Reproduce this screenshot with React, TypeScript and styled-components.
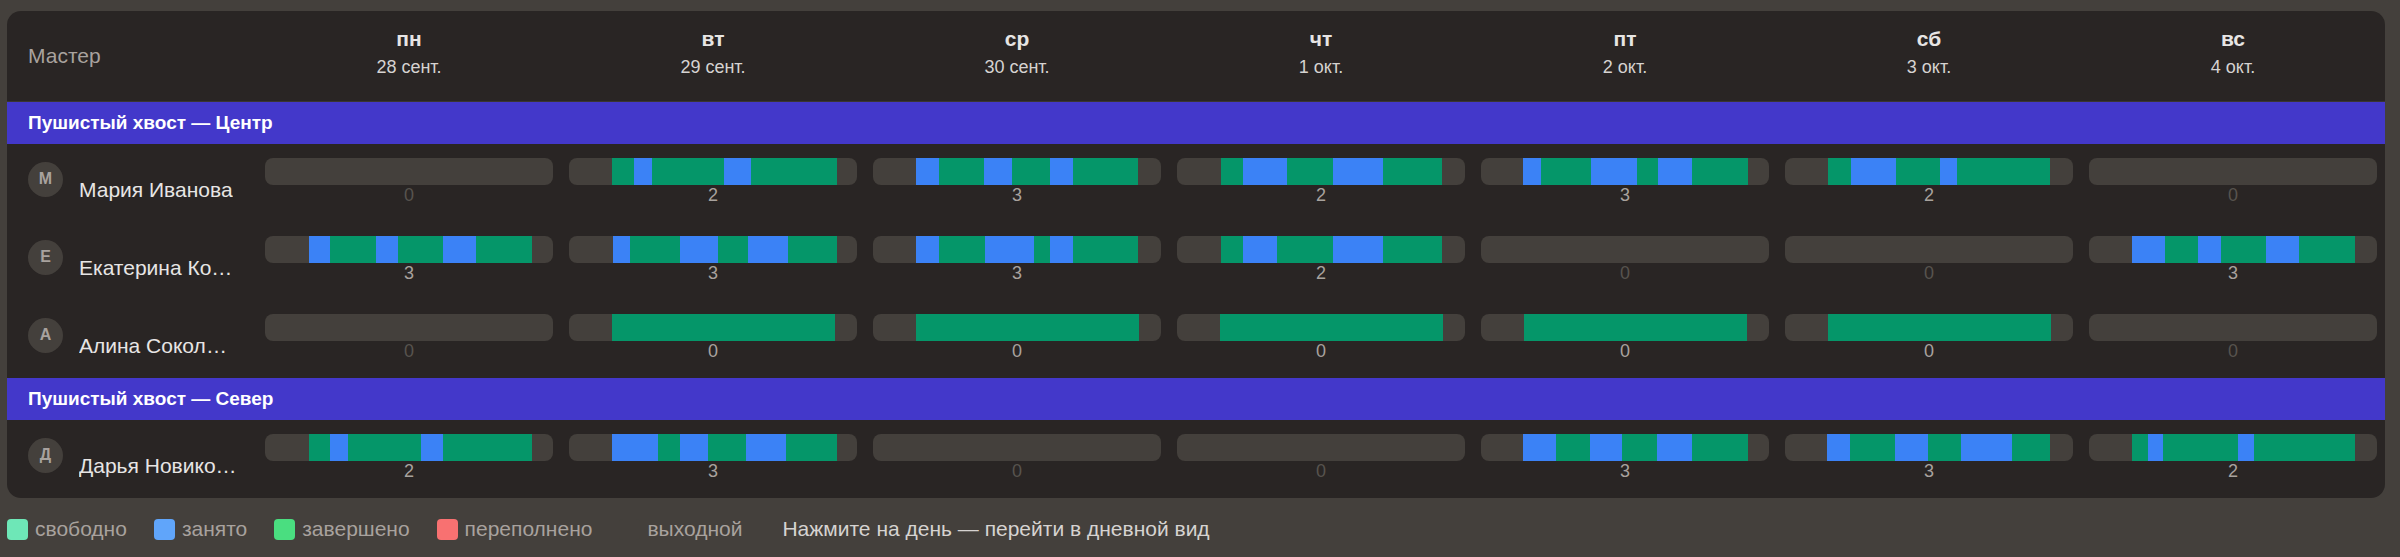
import React from 'react';
import styled, { createGlobalStyle } from 'styled-components';

const GlobalStyle = createGlobalStyle`
  html, body {
    margin: 0;
    padding: 0;
    background: #44403c;
    font-family: "Liberation Sans", Arial, sans-serif;
  }
`;

type Kind = 'b' | 'g';
type Seg = [Kind, number, number];
type Day = { segs: Seg[] | null; count: number };

const BAR = 288;

const days = [
  { name: 'пн', date: '28 сент.' },
  { name: 'вт', date: '29 сент.' },
  { name: 'ср', date: '30 сент.' },
  { name: 'чт', date: '1 окт.' },
  { name: 'пт', date: '2 окт.' },
  { name: 'сб', date: '3 окт.' },
  { name: 'вс', date: '4 окт.' },
];

const off: Day = { segs: null, count: 0 };
const full: Day = { segs: [['g', 43, 266]], count: 0 };

const groups: { title: string; masters: { name: string; week: Day[] }[] }[] = [
  {
    title: 'Пушистый хвост — Центр',
    masters: [
      {
        name: 'Мария Иванова',
        week: [
          off,
          { segs: [['g', 43, 65], ['b', 65, 83], ['g', 83, 155], ['b', 155, 182], ['g', 182, 268]], count: 2 },
          { segs: [['b', 43, 66], ['g', 66, 111], ['b', 111, 139], ['g', 139, 177], ['b', 177, 200], ['g', 200, 265]], count: 3 },
          { segs: [['g', 44, 66], ['b', 66, 110], ['g', 110, 156], ['b', 156, 206], ['g', 206, 265]], count: 2 },
          { segs: [['b', 42, 60], ['g', 60, 110], ['b', 110, 156], ['g', 156, 177], ['b', 177, 211], ['g', 211, 267]], count: 3 },
          { segs: [['g', 43, 66], ['b', 66, 111], ['g', 111, 155], ['b', 155, 172], ['g', 172, 265]], count: 2 },
          off,
        ],
      },
      {
        name: 'Екатерина Козлова',
        week: [
          { segs: [['b', 44, 65], ['g', 65, 111], ['b', 111, 133], ['g', 133, 178], ['b', 178, 211], ['g', 211, 267]], count: 3 },
          { segs: [['b', 44, 61], ['g', 61, 111], ['b', 111, 149], ['g', 149, 179], ['b', 179, 219], ['g', 219, 268]], count: 3 },
          { segs: [['b', 43, 66], ['g', 66, 112], ['b', 112, 161], ['g', 161, 177], ['b', 177, 200], ['g', 200, 265]], count: 3 },
          { segs: [['g', 44, 66], ['b', 66, 100], ['g', 100, 156], ['b', 156, 206], ['g', 206, 265]], count: 2 },
          off,
          off,
          { segs: [['b', 43, 76], ['g', 76, 109], ['b', 109, 132], ['g', 132, 177], ['b', 177, 210], ['g', 210, 266]], count: 3 },
        ],
      },
      {
        name: 'Алина Соколова',
        week: [off, full, full, full, full, full, off],
      },
    ],
  },
  {
    title: 'Пушистый хвост — Север',
    masters: [
      {
        name: 'Дарья Новикова',
        week: [
          { segs: [['g', 44, 65], ['b', 65, 83], ['g', 83, 156], ['b', 156, 178], ['g', 178, 267]], count: 2 },
          { segs: [['b', 43, 89], ['g', 89, 111], ['b', 111, 139], ['g', 139, 177], ['b', 177, 217], ['g', 217, 268]], count: 3 },
          off,
          off,
          { segs: [['b', 42, 75], ['g', 75, 109], ['b', 109, 141], ['g', 141, 176], ['b', 176, 211], ['g', 211, 267]], count: 3 },
          { segs: [['b', 42, 65], ['g', 65, 110], ['b', 110, 143], ['g', 143, 176], ['b', 176, 227], ['g', 227, 265]], count: 3 },
          { segs: [['g', 43, 59], ['b', 59, 74], ['g', 74, 149], ['b', 149, 165], ['g', 165, 266]], count: 2 },
        ],
      },
    ],
  },
];

const legend = [
  { label: 'свободно', color: '#6ee7b7' },
  { label: 'занято', color: '#60a5fa' },
  { label: 'завершено', color: '#4ade80' },
  { label: 'переполнено', color: '#f87171' },
  { label: 'выходной', color: '#44403c' },
];

const Page = styled.div`
  padding: 11px 15px 0 7px;
`;

const Card = styled.div`
  background: #292524;
  border-radius: 14px;
  overflow: hidden;
`;

const Grid = styled.div`
  display: grid;
  grid-template-columns: 250px repeat(7, 1fr);
`;

const HeaderRow = styled(Grid)`
  height: 90px;
  border-bottom: 1px solid #3a3532;
`;

const MasterLabel = styled.div`
  display: flex;
  align-items: center;
  padding-left: 21px;
  font-size: 21px;
  color: #a8a29e;
`;

const DayHead = styled.div`
  display: flex;
  flex-direction: column;
  align-items: center;
  padding-top: 15px;
  gap: 6px;
`;

const DayName = styled.div`
  font-size: 21px;
  line-height: 25px;
  font-weight: 700;
  color: #e7e5e4;
`;

const DayDate = styled.div`
  font-size: 18px;
  line-height: 21px;
  color: #d6d3d1;
`;

const Band = styled.div`
  height: 42px;
  display: flex;
  align-items: center;
  padding-left: 21px;
  background: #4338ca;
  color: #fff;
  font-size: 19px;
  font-weight: 700;
`;

const Row = styled(Grid)`
  height: 78px;
`;

const MasterCell = styled.div`
  display: flex;
  align-items: flex-start;
  gap: 16px;
  padding: 18px 0 0 21px;
  min-width: 0;
`;

const Avatar = styled.div`
  flex: none;
  width: 35px;
  height: 35px;
  border-radius: 50%;
  background: #44403c;
  color: #a8a29e;
  font-size: 16px;
  font-weight: 700;
  display: flex;
  align-items: center;
  justify-content: center;
  padding-bottom: 2px;
  box-sizing: border-box;
`;

const Name = styled.div`
  margin-top: 15px;
  max-width: 158.5px;
  font-size: 21px;
  line-height: 25px;
  color: #e7e5e4;
  white-space: nowrap;
  overflow: hidden;
  text-overflow: ellipsis;
`;

const DayCell = styled.div`
  padding: 14px 8px 0;
  cursor: pointer;
`;

const Track = styled.div`
  display: flex;
  height: 27px;
  border-radius: 8px;
  background: #44403c;
  overflow: hidden;
`;

const Segment = styled.div<{ $kind: Kind | 'gap' }>`
  flex: none;
  height: 100%;
  background: ${(p) => (p.$kind === 'b' ? '#3b82f6' : p.$kind === 'g' ? '#059669' : 'transparent')};
`;

const Count = styled.div<{ $dim: boolean }>`
  text-align: center;
  font-size: 18px;
  line-height: 21px;
  color: ${(p) => (p.$dim ? '#57534e' : '#a8a29e')};
`;

const Legend = styled.div`
  display: flex;
  align-items: center;
  padding-top: 19px;
  font-size: 21px;
`;

const LegendItem = styled.div`
  display: flex;
  align-items: center;
  gap: 7px;
  margin-right: 27px;
  color: #a8a29e;
`;

const Swatch = styled.span<{ $color: string }>`
  width: 21px;
  height: 21px;
  border-radius: 4px;
  background: ${(p) => p.$color};
`;

const Hint = styled.div`
  margin-left: 13px;
  color: #d6d3d1;
`;

const pct = (v: number) => `${(v / BAR) * 100}%`;

const DayBar = ({ day }: { day: Day }) => {
  const pieces: React.ReactNode[] = [];
  if (day.segs) {
    let pos = 0;
    day.segs.forEach(([k, s, e], i) => {
      if (s > pos) pieces.push(<Segment key={`gap${i}`} $kind="gap" style={{ width: pct(s - pos) }} />);
      pieces.push(<Segment key={i} $kind={k} style={{ width: pct(e - s) }} />);
      pos = e;
    });
  }
  return (
    <DayCell>
      <Track>{pieces}</Track>
      <Count $dim={!day.segs}>{day.count}</Count>
    </DayCell>
  );
};

export default function App() {
  return (
    <Page>
      <GlobalStyle />
      <Card>
        <HeaderRow>
          <MasterLabel>Мастер</MasterLabel>
          {days.map((d) => (
            <DayHead key={d.name}>
              <DayName>{d.name}</DayName>
              <DayDate>{d.date}</DayDate>
            </DayHead>
          ))}
        </HeaderRow>
        {groups.map((g) => (
          <React.Fragment key={g.title}>
            <Band>{g.title}</Band>
            {g.masters.map((m) => (
              <Row key={m.name}>
                <MasterCell>
                  <Avatar>{m.name[0]}</Avatar>
                  <Name>{m.name}</Name>
                </MasterCell>
                {m.week.map((d, i) => (
                  <DayBar key={i} day={d} />
                ))}
              </Row>
            ))}
          </React.Fragment>
        ))}
      </Card>
      <Legend>
        {legend.map((l) => (
          <LegendItem key={l.label}>
            <Swatch $color={l.color} />
            {l.label}
          </LegendItem>
        ))}
        <Hint>Нажмите на день — перейти в дневной вид</Hint>
      </Legend>
    </Page>
  );
}
